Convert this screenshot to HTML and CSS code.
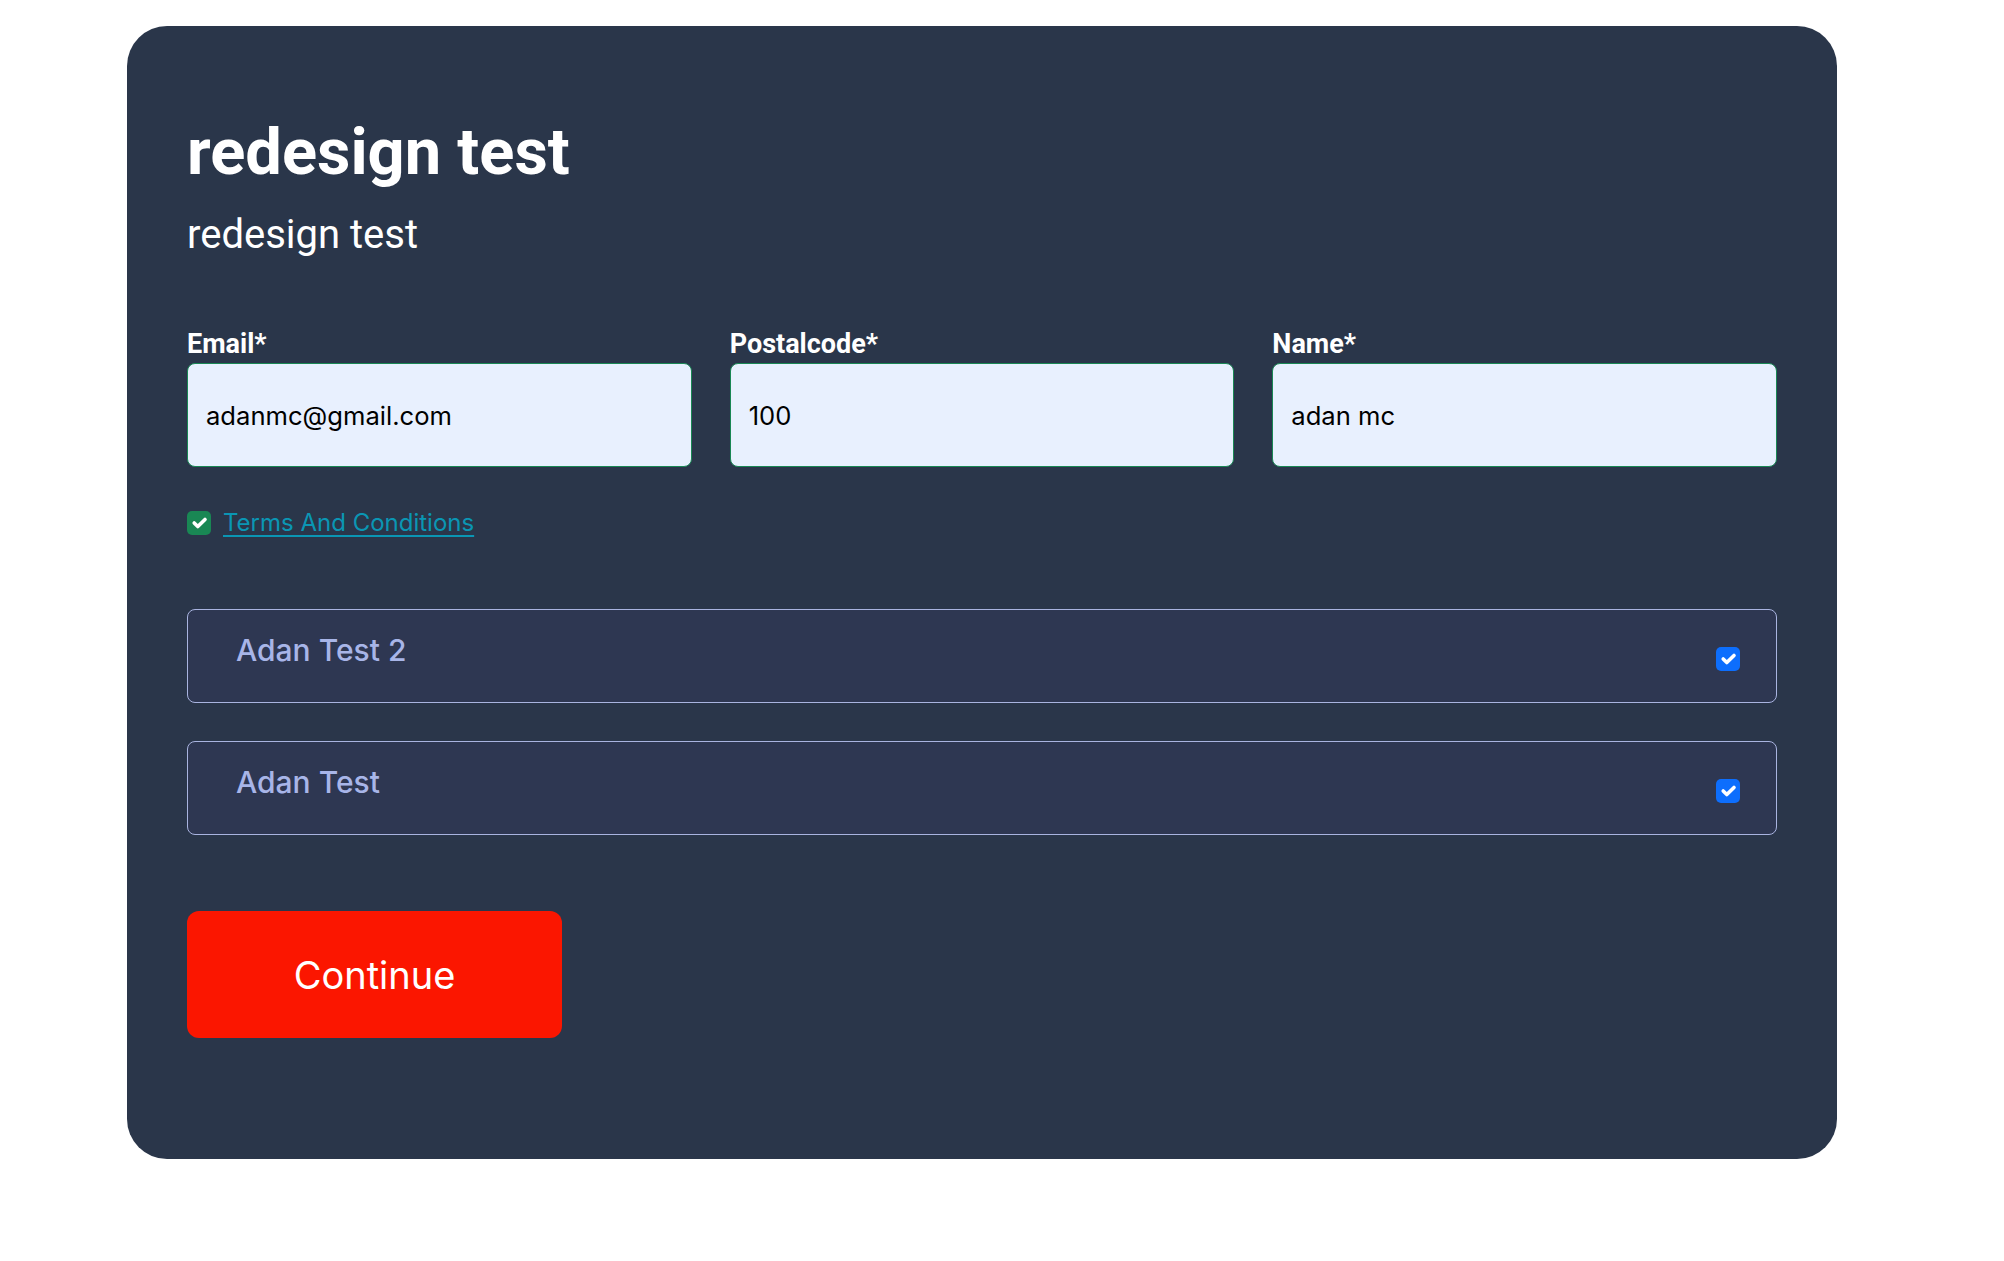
FILE: index.html
```html
<!DOCTYPE html>
<html lang="en">
<head>
<meta charset="utf-8">
<title>redesign test</title>
<link rel="stylesheet" href="styles.css">
</head>
<body>
<main class="card">
  <h1 class="title">redesign test</h1>
  <p class="subtitle">redesign test</p>

  <div class="fields">
    <label class="field">
      <span class="field-label">Email*</span>
      <input class="field-input" type="text" value="adanmc@gmail.com">
    </label>
    <label class="field">
      <span class="field-label">Postalcode*</span>
      <input class="field-input" type="text" value="100">
    </label>
    <label class="field">
      <span class="field-label">Name*</span>
      <input class="field-input" type="text" value="adan mc">
    </label>
  </div>

  <div class="terms">
    <span class="check check-green">
      <svg viewBox="0 0 20 20" width="24" height="24"><path fill="none" stroke="#fff" stroke-linecap="round" stroke-linejoin="round" stroke-width="3" d="m6 10 3 3 6-6"/></svg>
    </span>
    <a class="terms-link" href="#">Terms And Conditions</a>
  </div>

  <div class="options">
    <div class="option">
      <span class="option-text">Adan Test 2</span>
      <span class="check check-blue">
        <svg viewBox="0 0 20 20" width="24" height="24"><path fill="none" stroke="#fff" stroke-linecap="round" stroke-linejoin="round" stroke-width="3" d="m6 10 3 3 6-6"/></svg>
      </span>
    </div>
    <div class="option">
      <span class="option-text">Adan Test</span>
      <span class="check check-blue">
        <svg viewBox="0 0 20 20" width="24" height="24"><path fill="none" stroke="#fff" stroke-linecap="round" stroke-linejoin="round" stroke-width="3" d="m6 10 3 3 6-6"/></svg>
      </span>
    </div>
  </div>

  <button class="continue" type="button">Continue</button>
</main>
</body>
</html>
```

FILE: styles.css
```css
* { box-sizing: border-box; }

html, body {
  margin: 0;
  padding: 0;
  background: #ffffff;
}

body {
  font-family: Inter, "Liberation Sans", sans-serif;
}

.card {
  width: 1710px;
  margin: 26px 0 0 127px;
  padding: 86px 60px 121px 60px;
  background: #2a364a;
  border-radius: 40px;
  display: flex;
  flex-direction: column;
}

.title {
  margin: 0;
  font-family: Roboto, "Liberation Sans", sans-serif;
  font-weight: 700;
  font-size: 65px;
  line-height: 80px;
  color: #ffffff;
}

.subtitle {
  margin: 19px 0 0 0;
  font-family: Roboto, "Liberation Sans", sans-serif;
  font-weight: 400;
  font-size: 40px;
  line-height: 48px;
  color: #ffffff;
}

.fields {
  margin-top: 70px;
  display: grid;
  grid-template-columns: repeat(3, 1fr);
  column-gap: 38px;
}

.field {
  display: flex;
  flex-direction: column;
  gap: 4px;
}

.field-label {
  font-family: Roboto, "Liberation Sans", sans-serif;
  font-weight: 700;
  font-size: 27px;
  line-height: 30px;
  color: #ffffff;
}

.field-input {
  width: 100%;
  height: 104px;
  padding: 0 18px;
  border: 1px solid #198754;
  border-radius: 8px;
  background: #e8f0fe;
  color: #000000;
  font-family: Inter, "Liberation Sans", sans-serif;
  font-size: 25.6px;
  outline: none;
}

.terms {
  margin-top: 44px;
  display: flex;
  align-items: center;
  gap: 12px;
  height: 24px;
}

.check {
  width: 24px;
  height: 24px;
  border-radius: 5px;
  display: flex;
  flex: none;
}

.check-green { background: #198754; }
.check-blue { background: #0d6efd; }

.terms-link {
  font-family: Inter, "Liberation Sans", sans-serif;
  font-size: 24px;
  line-height: 24px;
  color: #0a96b4;
  text-decoration: underline;
  text-underline-offset: 4px;
  text-decoration-thickness: 2px;
}

.options {
  margin-top: 74px;
  display: flex;
  flex-direction: column;
  gap: 38px;
}

.option {
  height: 94px;
  padding: 0 36px 0 48px;
  border: 1px solid #a9b4e0;
  border-radius: 8px;
  background: #2e3752;
  display: flex;
  align-items: center;
  justify-content: space-between;
}

.option-text {
  font-family: Inter, "Liberation Sans", sans-serif;
  font-weight: 500;
  font-size: 30px;
  line-height: 36px;
  color: #a8b5e8;
  margin-bottom: 12px;
}

.option .check {
  margin-top: 6px;
}

.continue {
  margin-top: 76px;
  align-self: flex-start;
  width: 375px;
  height: 127px;
  border: none;
  border-radius: 12px;
  background: #fb1600;
  color: #ffffff;
  font-family: Inter, "Liberation Sans", sans-serif;
  font-size: 38px;
  font-weight: 400;
  display: flex;
  align-items: center;
  justify-content: center;
  padding: 0;
}
```
